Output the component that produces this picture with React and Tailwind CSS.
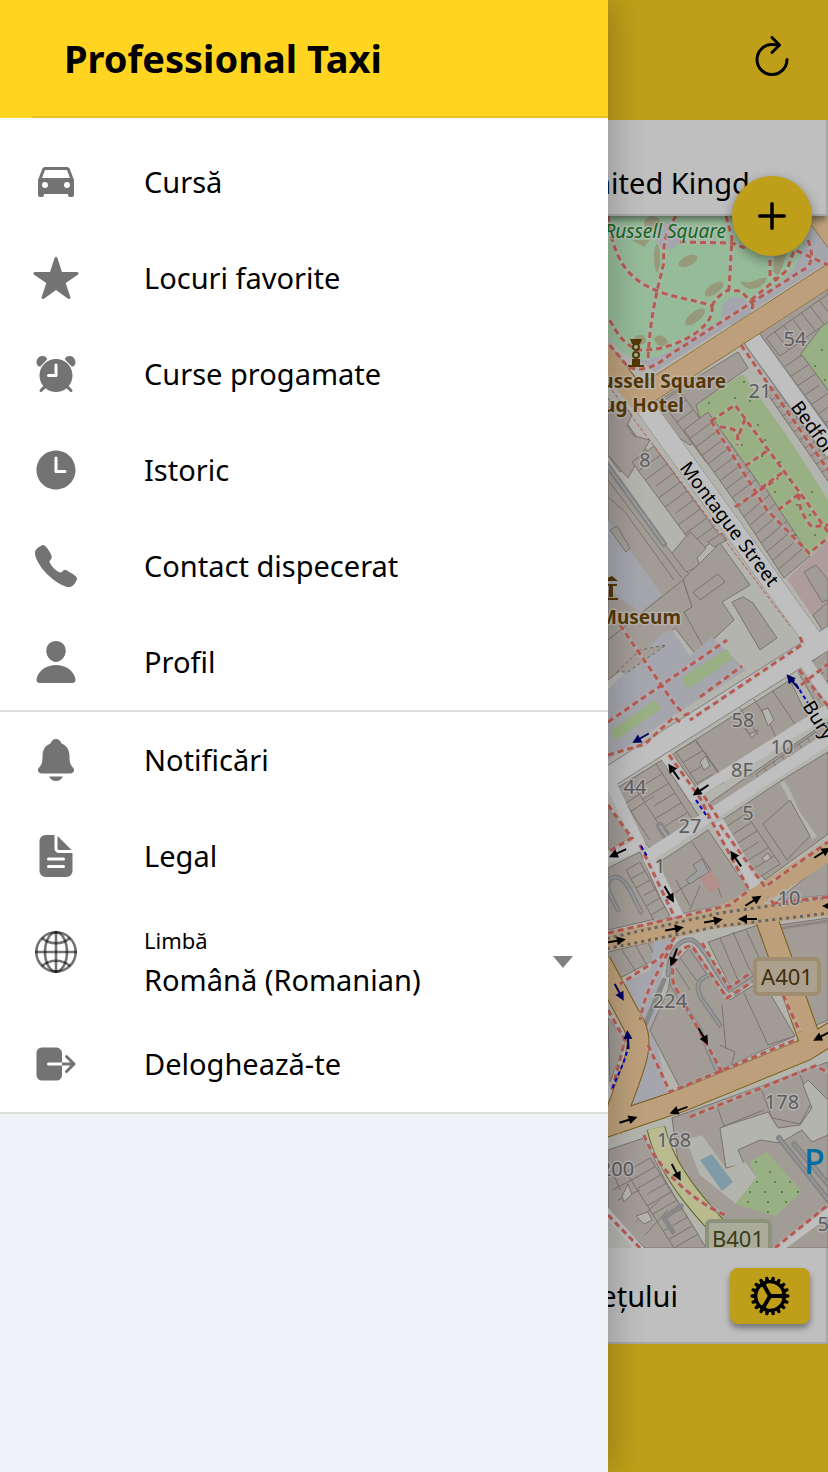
import React, { useState } from 'react';
import { IoIosAdd, IoMdCar } from 'react-icons/io';
import {
  IoAlarm,
  IoCall,
  IoCog,
  IoDocumentText,
  IoLogOut,
  IoNotifications,
  IoPerson,
  IoRefresh,
  IoStar,
  IoTime,
} from 'react-icons/io5';

const mainLinks = [
  { id: 'ride', label: 'Cursă', icon: IoMdCar },
  { id: 'favorites', label: 'Locuri favorite', icon: IoStar },
  { id: 'scheduled', label: 'Curse progamate', icon: IoAlarm },
  { id: 'history', label: 'Istoric', icon: IoTime },
  { id: 'contact', label: 'Contact dispecerat', icon: IoCall },
  { id: 'profile', label: 'Profil', icon: IoPerson },
];

const infoLinks = [
  { id: 'notifications', label: 'Notificări', icon: IoNotifications },
  { id: 'legal', label: 'Legal', icon: IoDocumentText },
];

// Row of houses: starts at (x, y), runs along (dx, dy), depth vector (px, py)
function Terrace({ x, y, dx, dy, px, py, n }) {
  const walls = [];
  for (let i = 1; i < n; i++) {
    const k = i / n;
    const d = i % 3 === 0 ? 0.8 : 1;
    walls.push(`M${x + dx * k} ${y + dy * k}l${px * d} ${py * d}`);
  }
  return (
    <g fill="#d9d0c9" stroke="#a39a93" strokeWidth="1">
      <path d={`M${x} ${y}l${dx} ${dy}l${px} ${py}l${-dx} ${-dy}z`} />
      <path d={walls.join('')} />
    </g>
  );
}

function Arrow({ x, y, a, color = '#000' }) {
  return (
    <g transform={`translate(${x} ${y}) rotate(${a})`} fill={color}>
      <path d="M-9 -1H1V-4.500L10 0L1 4.500V1H-9z" />
    </g>
  );
}

const numbers = [
  [795, 346, '54'], [760, 398, '21'], [645, 467, '8'], [743, 727, '58'],
  [782, 754, '10'], [742, 777, '8F'], [635, 794, '44'], [748, 820, '5'],
  [690, 833, '27'], [660, 873, '1'], [789, 905, '10'], [670, 1008, '224'],
  [782, 1109, '178'], [674, 1147, '168'], [617, 1176, '200'], [829, 1231, '55'],
];

const arrows = [
  [674, 772, 235], [701, 790, 146], [618, 853, 155], [736, 859, 235],
  [669, 894, 60], [753, 901, -32], [822, 853, -32], [674, 929, -10],
  [713, 921, -10], [748, 919, 180], [832, 906, 180], [616, 941, -10],
  [674, 957, 110], [703, 1036, 60], [822, 1036, 152], [628, 1120, -18],
  [679, 1110, 160], [676, 1172, 62],
];

// Footpaths
const paths = [
  'M608 216C612 250 622 272 645 285S690 298 712 306',
  'M676 216C668 228 662 242 664 262C660 280 650 312 648 360',
  'M680 242L732 243L745 248',
  'M726 216L732 238L729 290L741 291L753 304',
  'M770 250V276L778 280',
  'M712 306C714 300 722 292 729 290',
  'M712 306C716 330 668 352 640 350C620 345 614 325 608 318',
  'M753 304L752 309M751 300L785 272C790 266 790 258 795 250L828 265',
  'M808 240C812 250 814 262 806 268L668 356C650 372 636 370 628 367L608 343',
  'M741 345L828 470',
  'M711 421L735 405L803 497L828 532M711 421L767 510L809 553L828 538M745 419L737 440M720 427C735 428 740 430 737 445M745 466L767 451M761 488L783 472M778 510L799 494M735 507L778 478M799 494C798 510 806 520 812 527L828 525',
  'M800 637L803 644L690 720',
  'M620 625L675 705L685 715L693 712M608 722L727 640M700 697L742 666',
  'M608 755L645 744L674 717L680 722',
  'M608 805L632 838L608 852M640 845L675 918M669 755L700 798L711 820L748 888M704 796L718 818M720 825L765 887L828 842',
  'M608 933L675 918L730 905L748 891M828 897L775 903M775 905L768 897',
  'M675 937L660 958L620 984M672 944C655 980 647 985 640 1020',
  'M648 1045L670 1092L795 1040M722 1072L674 985C668 965 680 945 692 946L727 998L752 982M702 943L729 988L752 972M783 995L800 1032',
  'M608 1010L625 1040L612 1090M690 1117L815 1066L828 1072M644 1135C655 1165 690 1200 725 1215M608 1215L640 1248M775 1248L828 1205',
  'M799 670L828 706M801 685L828 664',
];

function CityMap() {
  return (
    <svg
      viewBox="0 216 828 1032"
      preserveAspectRatio="xMaxYMin slice"
      className="block h-0 min-h-0 w-full flex-1"
      role="img"
      aria-label="Harta"
      fontFamily="'Noto Sans', sans-serif"
    >
      <rect y="216" width="828" height="1032" fill="#f1f0e8" />

      {/* Russell Square */}
      <path d="M0 216H828V262L655 372L600 335L0 216z" fill="#dddde8" />
      <path d="M600 216H812L800 255C792 280 772 285 745 305L690 338C668 352 650 366 628 356C616 348 604 332 590 322z" fill="#c8facc" />
      <g fill="#c9c19a" opacity=".8">
        <ellipse cx="688" cy="261" rx="10" ry="5" transform="rotate(-25 688 261)" />
        <ellipse cx="657" cy="258" rx="3" ry="14" />
        <ellipse cx="714" cy="289" rx="11" ry="5" transform="rotate(-35 714 289)" />
        <path d="M740 281C752 286 758 276 767 278C762 292 744 292 740 281z" />
        <ellipse cx="695" cy="317" rx="12" ry="5" transform="rotate(-38 695 317)" />
        <path d="M775 250H788L779 276L773 272z" />
        <ellipse cx="661" cy="341" rx="7" ry="5" transform="rotate(30 661 341)" />
        <ellipse cx="640" cy="340" rx="6" ry="5" />
        <ellipse cx="652" cy="223" rx="8" ry="7" />
        <path d="M632 240L650 240L644 247z" />
      </g>
      <circle cx="668" cy="236" r="13" fill="#dddde8" />
      <circle cx="736" cy="312" r="15" fill="#dddde8" />

      {/* Gardens and lawns */}
      <g fill="#cdebb0">
        <path d="M695 405L743 374L790 440L828 500V544L806 557L762 510L745 485L730 465L722 440L705 432z" />
        <path d="M800 355L828 318V410L812 392z" />
      </g>

      {/* Terraces near the square */}
      <path d="M745 338L828 285V318L800 355L810 372L784 388z" fill="#d9d0c9" stroke="#a39a93" />
      <Terrace x={766} y={338} dx={62} dy={-44} px={14} py={18} n={7} />
      <Terrace x={784} y={367} dx={62} dy={84} px={18} py={-12} n={9} />
      <path d="M640 412L738 352L748 368L696 405L704 432L720 440L736 486L700 440L690 445z" fill="#d9d0c9" stroke="#a39a93" />
      <Terrace x={662} y={402} dx={44} dy={60} px={17} py={-12} n={6} />
      <Terrace x={684} y={430} dx={54} dy={76} px={24} py={-18} n={9} />
      <Terrace x={738} y={508} dx={46} dy={70} px={26} py={-22} n={8} />
      <Terrace x={766} y={392} dx={78} dy={112} px={16} py={-10} n={14} />
      <path d="M787 579L828 540V640L815 620z" fill="#e9d1d0" />
      <path d="M804 572L816 565L828 580V600L822 602z" fill="#d9d0c9" stroke="#a39a93" />
      <path d="M813 615L828 602V632L822 630z" fill="#d9d0c9" stroke="#a39a93" />

      {/* Blocks along the museum */}
      <Terrace x={608} y={398} dx={40} dy={54} px={-28} py={20} n={6} />
      <path d="M608 408L622 402L632 415L627 425L634 436L650 440L628 478L608 455z" fill="#d9d0c9" stroke="#a39a93" />
      <Terrace x={654} y={446} dx={66} dy={90} px={-22} py={16} n={10} />
      <path d="M608 470L655 532L690 575L608 640z" fill="#d9d0c9" stroke="#a39a93" />
      <path d="M608 520L662 595L640 612L608 590z" fill="#dddde8" />
      <path d="M608 480L682 578M608 497L625 512L674 580" stroke="#a39a93" fill="none" />
      <path d="M610 530L617 526L630 548L626 552z" fill="#d9d0c9" stroke="#a39a93" />
      <path d="M600 455L664 544" stroke="#b4b4b4" strokeWidth="6" strokeLinecap="round" />
      <path d="M600 455L664 544" stroke="#eee" strokeWidth="1" />
      <g fill="#d9d0c9" stroke="#a39a93">
        <path d="M672 553L690 532L706 548L697 558L700 566L686 572z" />
        <path d="M708 542L722 533L727 540L714 547z" />
        <path d="M608 640L683 580L692 607L684 612L694 628L710 637L696 655L675 628L608 680z" />
        <path d="M692 607L683 579L698 565L720 543L750 585L722 602L734 620L704 648L684 612z" />
        <path d="M693 592L718 574L725 582L700 600z" />
        <path d="M732 602L743 597L753 603L777 638L760 650z" />
      </g>
      <path d="M608 690L664 632L672 630L690 656L712 637L746 670L690 705L608 760z" fill="#dddde8" />
      <path d="M617 672L640 650L666 645L628 672z" fill="#d9d0c9" stroke="#8f867f" strokeDasharray="3 3" />
      <g fill="#cdebb0">
        <path d="M610 731L655 700L661 709L615 741z" />
        <path d="M681 678L727 649L733 659L688 689z" />
      </g>

      {/* Blocks south of Great Russell Street */}
      <path d="M673 754L790 680L808 718L698 790z" fill="#d9d0c9" stroke="#a39a93" />
      <Terrace x={676} y={752} dx={28} dy={42} px={20} py={-12} n={4} />
      <path d="M696 742L706 754L724 780M754 699L770 724L776 738M772 690L795 724M740 708L758 735" stroke="#a39a93" fill="none" />
      <path d="M762 710L768 708L774 720L768 726zM700 762L706 756L710 766L704 770zM745 728L750 734L758 730L752 738z" fill="#f1f0e8" stroke="#a39a93" />
      <path d="M708 804L812 732L828 722V732L716 812z" fill="#d9d0c9" stroke="#a39a93" />
      <Terrace x={756} y={774} dx={60} dy={-42} px={8} py={12} n={7} />
      <path d="M798 672L828 650V712L822 714z" fill="#d9d0c9" stroke="#a39a93" />
      <path d="M806 684L824 672M812 692L828 680M818 700L828 694" stroke="#a39a93" />
      <path d="M614 790L662 760L700 818L652 850L640 838z" fill="#d9d0c9" stroke="#a39a93" />
      <Terrace x={656} y={764} dx={38} dy={58} px={-26} py={16} n={6} />
      <path d="M618 792L650 840M630 812L654 796M626 803L646 790" stroke="#a39a93" />
      <path d="M660 826L668 838" stroke="#b4b4b4" strokeWidth="8" strokeLinecap="round" />
      <path d="M660 826L668 838" stroke="#ddd" strokeWidth="2" strokeLinecap="round" />
      <path d="M608 808L630 838L608 850z" fill="#d9d0c9" stroke="#a39a93" />
      <path d="M722 820L782 780L828 752V834L765 880z" fill="#d9d0c9" stroke="#a39a93" />
      <Terrace x={724} y={828} dx={34} dy={50} px={22} py={-14} n={6} />
      <path d="M782 782L787 790L798 814L815 838" stroke="#f1f0e8" strokeWidth="5" fill="none" />
      <path d="M763 824L790 800L810 836L787 860z" fill="#d9d0c9" stroke="#a39a93" />
      <path d="M762 858L768 853L771 858L765 862z" fill="#f1f0e8" stroke="#a39a93" />
      <path d="M655 865L708 830L750 892L728 904L680 914z" fill="#d9d0c9" stroke="#a39a93" />
      <path d="M692 842L712 872L722 898M675 893L706 872M690 910L700 886M676 880L690 906" stroke="#a39a93" fill="none" />
      <path d="M686 880L697 871L693 865L702 859L709 872L699 878L690 884z" fill="#d5d5d5" stroke="#a39a93" />
      <path d="M700 878L712 870L721 886L710 894z" fill="#eebfba" />
      <path d="M608 868L640 852L668 916L608 930z" fill="#d9d0c9" stroke="#a39a93" />
      <Terrace x={640} y={862} dx={30} dy={54} px={-14} py={8} n={6} />
      <g fill="none" strokeLinecap="round">
        <path d="M618 910C608 892 604 882 612 878S626 884 630 890L641 912" stroke="#b4b4b4" strokeWidth="5" />
        <path d="M618 910C608 892 604 882 612 878S626 884 630 890L641 912" stroke="#e4e4e4" strokeWidth="1" />
      </g>
      <path d="M790 890L828 860V895L778 900z" fill="#d9d0c9" stroke="#a39a93" />

      {/* Blocks south of Bloomsbury Way */}
      <path d="M608 952L668 938L658 958L620 978L608 964z" fill="#d9d0c9" stroke="#a39a93" />
      <path d="M622 950L636 972M636 946L646 964M648 943L656 958" stroke="#a39a93" />
      <path d="M655 938L674 936L660 980L655 1035L668 1092L628 1110L645 1050L620 984L650 970z" fill="#dddde8" />
      <path d="M672 966L692 945L730 1000L762 980L795 1036L680 1088L650 1030L668 990z" fill="#d9d0c9" stroke="#a39a93" />
      <path d="M708 942L758 925L772 965L735 996z" fill="#d9d0c9" stroke="#a39a93" />
      <path d="M720 938L738 980M733 932L752 975M746 930L764 968M680 958L700 985M676 968L690 990M690 950L708 976M744 993L768 1045L795 1036M722 1005L726 1050M720 1045L735 1052L730 1070" stroke="#a39a93" fill="none" />
      <path d="M779 925L828 918V1020L812 1027z" fill="#d9d0c9" stroke="#a39a93" />
      <path d="M782 928L828 921" stroke="#bdb5ae" strokeWidth="3" />
      <g fill="none" strokeLinecap="round">
        <path d="M668 975C668 955 678 938 692 940C704 945 716 975 729 990L752 975M672 985L700 1030L720 1078M643 1030L664 980M709 975C696 980 696 988 701 998L720 1025" stroke="#b4b4b4" strokeWidth="5" />
        <path d="M668 975C668 955 678 938 692 940C704 945 716 975 729 990L752 975M672 985L700 1030L720 1078M709 975C696 980 696 988 701 998L720 1025" stroke="#e4e4e4" strokeWidth="1" />
      </g>
      <path d="M608 1018L626 1040L610 1082z" fill="#d9d0c9" stroke="#a39a93" />
      <path d="M672 1118L828 1062V1248H740L680 1175z" fill="#d9d0c9" stroke="#a39a93" />
      <path d="M717 1106L724 1126L764 1110M761 1088L772 1118L800 1124L810 1105M724 1126L742 1164M798 1070L806 1090" stroke="#a39a93" fill="none" />
      <path d="M720 1128L728 1125L768 1112L778 1128L800 1125L812 1108L803 1085L808 1080L828 1100V1135L812 1142L802 1130L780 1143L760 1140L738 1150L744 1164L726 1168z" fill="#f1f0e8" stroke="#a39a93" />
      <path d="M686 1140L702 1135L726 1169L745 1162L760 1182L736 1204L700 1175z" fill="#f1f0e8" />
      <path d="M700 1160L712 1154L733 1182L722 1191z" fill="#a9cfdf" />
      <path d="M749 1162L767 1152L802 1192L775 1216L735 1204L757 1177z" fill="#cdebb0" />
      <path d="M779 1138L806 1172L828 1200M794 1144L828 1184" stroke="#b4b4b4" strokeWidth="6" strokeLinecap="round" fill="none" />
      <path d="M779 1138L806 1172L828 1200M794 1144L828 1184" stroke="#ddd" strokeWidth="1" fill="none" />
      <path d="M608 1150L644 1138L665 1180L706 1248H645L608 1212z" fill="#d9d0c9" stroke="#a39a93" />
      <Terrace x={650} y={1158} dx={48} dy={76} px={-24} py={14} n={9} />
      <path d="M612 1190L632 1180M618 1200L640 1190M612 1170L620 1190M636 1222L660 1200M645 1235L668 1210" stroke="#a39a93" />
      <path d="M622 1196L628 1184L632 1194L624 1202zM636 1216L648 1212L652 1220L644 1224z" fill="#f1f0e8" stroke="#a39a93" />
      <path d="M681 1206L664 1218L673 1232" stroke="#b4b4b4" strokeWidth="5" fill="none" strokeLinecap="round" />

      {/* Streets: casing first, then the fill */}
      <g fill="none" stroke="#b5b3b0">
        <path d="M630 386L812 638M750 336L836 455" strokeWidth="20" />
        <path d="M590 789L838 632" strokeWidth="22" />
      </g>
      <g fill="none" stroke="#fff">
        <path d="M630 386L812 638" strokeWidth="19" />
        <path d="M750 336L836 455" strokeWidth="17" />
        <path d="M590 789L838 632" strokeWidth="20" />
        <path d="M800 655L840 712" strokeWidth="12" />
        <path d="M693 795L828 710M665 755L697 800M610 782L640 845L600 860" strokeWidth="11" strokeLinejoin="round" />
        <path d="M645 858L838 732M718 822L760 893M648 856L682 925" strokeWidth="12" />
        <path d="M600 1080L618 1105M600 1205L645 1255M770 1255L838 1205" strokeWidth="8" />
      </g>

      {/* Main roads */}
      <g fill="none" stroke="#a57c1c">
        <path d="M640 398L838 270M810 205L838 243M600 350L640 400" strokeWidth="22" />
        <path d="M765 915L810 1040M600 962L634 1025C644 1045 636 1062 610 1130M840 1028L805 1050L683 1100L600 1128" strokeWidth="23" />
        <path d="M656 1128C665 1168 695 1205 740 1250" strokeWidth="19" stroke="#7f8b30" />
      </g>
      <path d="M656 1128C665 1168 695 1205 740 1250" fill="none" stroke="#f7fabf" strokeWidth="17" />
      <g fill="none" stroke="#fcd6a4" strokeLinejoin="round">
        <path d="M640 398L838 270" strokeWidth="21" />
        <path d="M810 205L838 243M600 350L645 408" strokeWidth="21" />
        <path d="M598 943L690 925C730 915 750 903 838 845M710 920L838 905" strokeWidth="19" />
        <path d="M765 915L810 1040M600 962L634 1025C644 1045 636 1062 610 1130M840 1028L805 1050L683 1100L600 1128" strokeWidth="21" />
      </g>
      <path d="M600 940L720 913L838 896M600 950L720 926L838 912" fill="none" stroke="#888" strokeWidth="3" strokeDasharray="3 4" />

      <g fill="none" stroke="#f5eeee" strokeWidth="5" opacity=".4">
        {paths.map((d) => (
          <path key={d} d={d} />
        ))}
      </g>
      <g fill="none" stroke="#f5786c" strokeWidth="3" strokeDasharray="6 4">
        {paths.map((d) => (
          <path key={d} d={d} />
        ))}
      </g>
      <path d="M608 385L657 450L790 626" fill="none" stroke="#f5786c" strokeWidth="1" strokeDasharray="4 2" />
      <path d="M696 800L708 818M641 846L648 858M792 678L808 703M628 1038C630 1055 618 1072 612 1090" fill="none" stroke="#0000ff" strokeWidth="2" strokeDasharray="4 3" />

      <g fill="#6a9a58">
        {[
          [744, 382], [735, 398], [750, 401], [709, 403], [758, 425], [742, 445], [765, 440], [762, 456],
          [780, 462], [775, 492], [790, 480], [797, 505], [812, 492], [810, 515], [795, 535], [815, 535],
          [822, 350], [815, 366], [825, 380], [756, 1162], [770, 1172], [757, 1182], [775, 1182], [790, 1182],
          [750, 1192], [765, 1192], [782, 1192], [798, 1192], [748, 1202], [768, 1202], [786, 1202], [768, 1212],
        ].map(([x, y]) => (
          <circle key={`${x}-${y}`} cx={x} cy={y} r="1" />
        ))}
      </g>

      {arrows.map(([x, y, a]) => (
        <Arrow key={`${x}-${y}`} x={x} y={y} a={a} />
      ))}
      <Arrow x={793} y={682} a={230} color="#000080" />
      <Arrow x={641} y={738} a={150} color="#000080" />
      <Arrow x={619} y={992} a={62} color="#000080" />
      <Arrow x={628} y={1040} a={266} color="#000080" />

      {/* Hotel and museum markers */}
      <g fill="#734a08">
        <path d="M630 339H642L640 344H632zM632 359H640V366H632zM628 365H644V367H628z" />
        <path d="M612 576L618 581H600zM603 584H617V586H603zM609 586H613V597H609zM602 598H618V600H602z" />
        <circle cx="636" cy="347" r="3" fill="none" stroke="#734a08" strokeWidth="2" />
        <circle cx="636" cy="355" r="3" fill="none" stroke="#734a08" strokeWidth="2" />
      </g>

      <g stroke="#fff" strokeOpacity=".6" strokeWidth="3" strokeLinejoin="round" paintOrder="stroke">
        <text x="726" y="238" textAnchor="end" fontSize="19" fontStyle="italic" fill="#1b8a2d">Russell Square</text>
        <g fontSize="19" fontWeight="700" fill="#734a08" textAnchor="end">
          <text x="726" y="388">Russell Square</text>
          <text x="684" y="412">Doubletree Snug Hotel</text>
          <text x="681" y="624">British Museum</text>
        </g>
        <g fontSize="20" fill="#7c7c7c" textAnchor="middle">
          {numbers.map(([x, y, label]) => (
            <text key={`${x}-${y}`} x={x} y={y}>{label}</text>
          ))}
        </g>
        <g fontSize="19" fill="#000">
          <text transform="translate(679 468) rotate(53)">Montague Street</text>
          <text transform="translate(790 407) rotate(54)">Bedford Place</text>
          <text transform="translate(802 706) rotate(58)">Bury Place</text>
        </g>
      </g>

      <g fontSize="22" textAnchor="middle">
        <rect x="755" y="959" width="64" height="35" rx="4" fill="#e6d6bf" stroke="#d6bc97" strokeWidth="4" />
        <text x="787" y="985" fill="#57400f">A401</text>
        <rect x="707" y="1221" width="63" height="35" rx="4" fill="#e3e5cf" stroke="#bcc4a4" strokeWidth="4" />
        <text x="738" y="1247" fill="#4b5320">B401</text>
      </g>
      <text x="804" y="1174" fontSize="34" fontWeight="500" fill="#0092da">P</text>
    </svg>
  );
}

function GlobeIcon({ className }) {
  return (
    <svg viewBox="0 0 48 48" className={className} fill="none" stroke="#000" strokeOpacity=".55" strokeWidth="2.6">
      <circle cx="24" cy="24" r="19.700" />
      <ellipse cx="24" cy="24" rx="11" ry="19.700" />
      <path d="M24 3V45" />
      <path d="M3 24H45" />
      <path d="M10 10C18 17 30 17 38 10" />
      <path d="M10 38C18 31 30 31 38 38" />
    </svg>
  );
}

function MenuLink({ item }) {
  const Icon = item.icon;
  return (
    <li>
      <a href={`#${item.id}`} className="flex h-24 items-center gap-16 px-8">
        <Icon className="size-12 shrink-0 text-[#737373]" />
        {item.label}
      </a>
    </li>
  );
}

function Menu() {
  const [language, setLanguage] = useState('ro');

  return (
    <aside className="fixed inset-y-0 left-0 w-[608px] max-w-full overflow-y-auto bg-[#eff3f8] shadow-[8px_0_32px_rgba(0,0,0,0.2)]">
      <header className="bg-[#ffd522] pl-8">
        <h1 className="border-b-2 border-[#e8c127] px-8 py-8 text-[38px] leading-[52px] font-bold">
          Professional Taxi
        </h1>
      </header>

      <nav className="bg-white">
        <ul className="border-b-2 border-[#dedede] pt-4">
          {mainLinks.map((item) => (
            <MenuLink key={item.id} item={item} />
          ))}
        </ul>
        <ul className="border-b-2 border-[#dedede]">
          {infoLinks.map((item) => (
            <MenuLink key={item.id} item={item} />
          ))}
          <li className="flex h-28 gap-16 px-8 py-6">
            <GlobeIcon className="size-12 shrink-0" />
            <div className="relative flex-1">
              <label htmlFor="language" className="block text-[22px] leading-6">Limbă</label>
              <select
                id="language"
                value={language}
                onChange={(e) => setLanguage(e.target.value)}
                className="block h-14 w-full appearance-none bg-transparent"
              >
                <option value="ro">Română (Romanian)</option>
                <option value="en">English</option>
              </select>
              <svg viewBox="0 0 20 12" className="pointer-events-none absolute top-7 right-[3px] h-3 w-5" fill="#808080">
                <path d="M0 0H20L10 12z" />
              </svg>
            </div>
          </li>
          <li>
            <button type="button" className="flex h-24 w-full items-center gap-16 px-8">
              <IoLogOut className="size-12 shrink-0 text-[#737373]" />
              Deloghează-te
            </button>
          </li>
        </ul>
      </nav>
    </aside>
  );
}

function App() {
  const [address, setAddress] = useState('United Kingdom');

  return (
    <div className="font-['Noto_Sans',sans-serif] text-[29px] leading-10 text-black">
      <div className="flex min-h-screen flex-col bg-[#ffd522]">
        <header className="flex h-[120px] items-center justify-end px-8 pb-2">
          <button type="button" aria-label="Reîncarcă">
            <IoRefresh className="size-12" />
          </button>
        </header>

        <div className="relative flex h-24 items-end justify-end border-r-2 border-b-2 border-[#dedede] bg-white pr-[76px] pb-2 shadow-[0_6px_6px_-2px_rgba(0,0,0,0.4)]">
          <input
            aria-label="Adresa"
            value={address}
            onChange={(e) => setAddress(e.target.value)}
            className="h-12 w-[178px] bg-transparent"
          />
          <button
            type="button"
            aria-label="Adaugă"
            className="absolute right-3.5 -bottom-[42px] flex size-20 items-center justify-center rounded-full bg-[#ffd522] shadow-[0_4px_12px_rgba(0,0,0,0.4)]"
          >
            <IoIosAdd className="size-14" />
          </button>
        </div>

        <CityMap />

        <div className="flex h-24 items-center justify-end gap-[52px] border-r-2 border-b-2 border-[#dedede] bg-white pt-0.5 pr-4">
          <span>Estimarea prețului</span>
          <button
            type="button"
            aria-label="Setări"
            className="flex h-14 w-20 items-center justify-center rounded-lg bg-[#ffd522] shadow-[0_4px_6px_rgba(0,0,0,0.4)]"
          >
            <IoCog className="size-12" />
          </button>
        </div>
        <footer className="h-32" />
      </div>

      <div className="fixed inset-0 bg-black/25" />
      <Menu />
    </div>
  );
}

export default App;
